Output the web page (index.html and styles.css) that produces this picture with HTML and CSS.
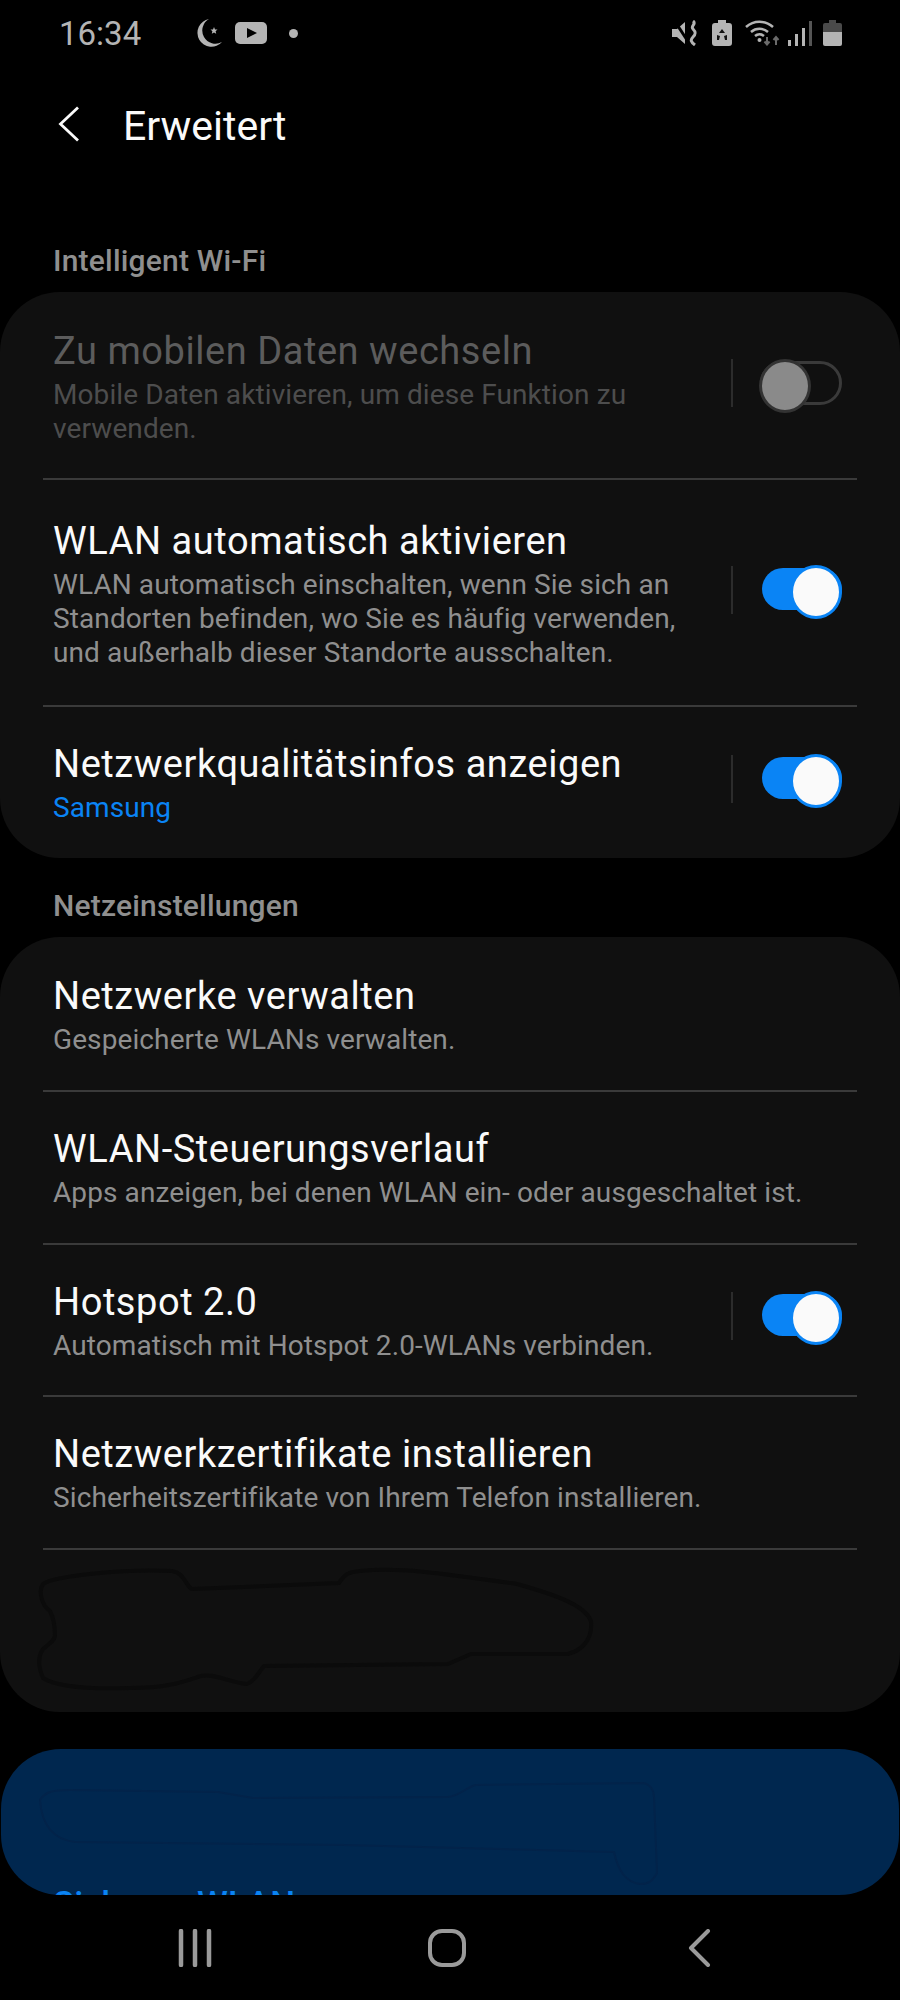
FILE: index.html
```html
<!DOCTYPE html>
<html lang="de">
<head>
  <meta charset="UTF-8">
  <meta name="viewport" content="width=device-width, initial-scale=1.0">
  <title>Erweitert</title>
  <link rel="stylesheet" href="styles.css">
</head>
<body>
  <div class="phone">
    <div class="status-bar">
      <div class="status-left">
        <span class="time">16:34</span>
        <svg class="icon-moon" width="26" height="30" viewBox="0 0 26 30">
          <path d="M12 1 A14 14 0 1 0 25 24 A13 13 0 0 1 12 1Z" fill="#b4b4b4"/>
          <path d="M17 9l1 2.4 2.5.2-1.9 1.6.6 2.5-2.2-1.3-2.2 1.3.6-2.5-1.9-1.6 2.5-.2z" fill="#b4b4b4"/>
        </svg>
        <svg class="icon-yt" width="32" height="22" viewBox="0 0 32 22">
          <rect width="32" height="22" rx="5" fill="#b4b4b4"/>
          <path d="M12 6l10 5-10 5z" fill="#000"/>
        </svg>
        <span class="status-dot"></span>
      </div>
      <div class="status-right">
        <svg width="26" height="26" viewBox="0 0 26 26">
          <path d="M0 9h5l8-7v22l-8-7H0z" fill="#b4b4b4"/>
          <path d="M2 0l15 23" stroke="#000" stroke-width="3"/>
          <path d="M21 1c4 3-3 5 0 8s3 5 0 8-2 5 2 8" fill="none" stroke="#b4b4b4" stroke-width="3"/>
        </svg>
        <svg class="icon-recycle" width="20" height="26" viewBox="0 0 20 26">
          <path d="M6 0h8v3h3a3 3 0 0 1 3 3v17a3 3 0 0 1-3 3H3a3 3 0 0 1-3-3V6a3 3 0 0 1 3-3h3z" fill="#b4b4b4"/>
          <path d="M10 9l3 4h-6zM5 15l3 1-1 4h-2zM15 15l-3 1 1 4h2z" fill="#111"/>
        </svg>
        <svg class="icon-wifi" width="36" height="26" viewBox="0 0 36 26">
          <path d="M1 7a20 20 0 0 1 27 0" fill="none" stroke="#b4b4b4" stroke-width="2.5"/>
          <path d="M6 12a13 13 0 0 1 17 0" fill="none" stroke="#b4b4b4" stroke-width="2.5"/>
          <path d="M10 16a7 7 0 0 1 9 0" fill="none" stroke="#b4b4b4" stroke-width="2.5"/>
          <circle cx="14.5" cy="20" r="2" fill="#b4b4b4"/>
          <path d="M22 17v7M19.5 21.500l2.500 3 2.500-3M31 25v-8M28.500 20l2.500-3 2.500 3" fill="none" stroke="#6a6a6a" stroke-width="2"/>
        </svg>
        <svg class="icon-signal" width="24" height="26" viewBox="0 0 24 26">
          <rect x="0" y="20" width="3" height="6" fill="#b4b4b4"/>
          <rect x="7" y="14" width="3" height="12" fill="#b4b4b4"/>
          <rect x="14" y="8" width="3" height="18" fill="#b4b4b4"/>
          <rect x="21" y="1" width="3" height="25" fill="#555"/>
        </svg>
        <svg class="icon-battery" width="19" height="26" viewBox="0 0 19 26">
          <path d="M6 0h7v3h4a2 2 0 0 1 2 2v7H0V5a2 2 0 0 1 2-2h4z" fill="#4a4a4a"/>
          <path d="M0 12h19v12a2 2 0 0 1-2 2H2a2 2 0 0 1-2-2z" fill="#b4b4b4"/>
        </svg>
      </div>
    </div>

    <div class="header">
      <svg class="back-icon" width="22" height="36" viewBox="0 0 22 36">
        <path d="M20 1.500L2.500 18 20 34.500" fill="none" stroke="#fafafa" stroke-width="2.800"/>
      </svg>
      <h1 class="page-title">Erweitert</h1>
    </div>

    <div class="content">
      <div class="section-label">Intelligent Wi-Fi</div>
      <div class="card">
        <div class="row disabled">
          <div class="row-text">
            <div class="row-title">Zu mobilen Daten wechseln</div>
            <div class="row-sub">Mobile Daten aktivieren, um diese Funktion zu verwenden.</div>
          </div>
          <div class="row-action">
            <span class="switch off"></span>
          </div>
        </div>
        <div class="row tall">
          <div class="row-text">
            <div class="row-title">WLAN automatisch aktivieren</div>
            <div class="row-sub">WLAN automatisch einschalten, wenn Sie sich an Standorten befinden, wo Sie es häufig verwenden, und außerhalb dieser Standorte ausschalten.</div>
          </div>
          <div class="row-action">
            <span class="switch on"></span>
          </div>
        </div>
        <div class="row last">
          <div class="row-text">
            <div class="row-title">Netzwerkqualitätsinfos anzeigen</div>
            <div class="row-sub accent">Samsung</div>
          </div>
          <div class="row-action">
            <span class="switch on"></span>
          </div>
        </div>
      </div>

      <div class="section-label next">Netzeinstellungen</div>
      <div class="card">
        <div class="row first">
          <div class="row-text">
            <div class="row-title">Netzwerke verwalten</div>
            <div class="row-sub">Gespeicherte WLANs verwalten.</div>
          </div>
        </div>
        <div class="row">
          <div class="row-text">
            <div class="row-title">WLAN-Steuerungsverlauf</div>
            <div class="row-sub">Apps anzeigen, bei denen WLAN ein- oder ausgeschaltet ist.</div>
          </div>
        </div>
        <div class="row">
          <div class="row-text">
            <div class="row-title">Hotspot 2.0</div>
            <div class="row-sub">Automatisch mit Hotspot 2.0-WLANs verbinden.</div>
          </div>
          <div class="row-action">
            <span class="switch on"></span>
          </div>
        </div>
        <div class="row">
          <div class="row-text">
            <div class="row-title">Netzwerkzertifikate installieren</div>
            <div class="row-sub">Sicherheitszertifikate von Ihrem Telefon installieren.</div>
          </div>
        </div>
        <!-- ausgemalte Stelle im Screenshot -->
        <div class="smudge-area">
          <svg class="smudge" width="600" height="130" viewBox="36 1565 600 130">
            <path d="M43 1583C55 1575 120 1568 172 1570C185 1572 186 1586 192 1588L339 1582C344 1574 348 1571 360 1570C400 1566 440 1572 517 1583C560 1595 585 1605 591 1620C593 1640 580 1650 568 1653L471 1653L448 1663L264 1665C258 1672 255 1680 247 1683C230 1682 215 1672 201 1675C185 1680 170 1687 130 1687C100 1688 60 1688 43 1677C38 1665 38 1655 43 1648C50 1642 54 1640 55 1635C55 1625 54 1618 50 1610C42 1605 38 1590 43 1583Z" fill="none" stroke="#0b0b0b" stroke-width="4" stroke-linejoin="round"/>
          </svg>
        </div>
      </div>

      <div class="card blue">
        <svg class="smudge" width="640" height="110" viewBox="36 1780 640 110">
          <path d="M40 1800C45 1792 52 1790 70 1790L218 1792 253 1798 448 1797C460 1796 468 1786 476 1785L643 1783C650 1784 654 1790 654 1797L657 1873C652 1882 648 1884 640 1884C625 1882 618 1870 614 1852L344 1845 75 1842C58 1840 42 1830 40 1800Z" fill="none" stroke="#02234a" stroke-width="2" stroke-linejoin="round"/>
        </svg>
        <div class="blue-link">Sicheres WLAN</div>
      </div>
    </div>

    <div class="nav-bar">
      <svg width="36" height="38" viewBox="0 0 36 38">
        <path d="M4 2v34M18 2v34M32 2v34" stroke="#9a9a9a" stroke-width="4.500" stroke-linecap="round"/>
      </svg>
      <svg width="40" height="38" viewBox="0 0 40 38">
        <rect x="3" y="2" width="34" height="34" rx="12" fill="none" stroke="#9a9a9a" stroke-width="4"/>
      </svg>
      <svg width="36" height="38" viewBox="0 0 36 38">
        <path d="M27 2L10 19 27 36" fill="none" stroke="#9a9a9a" stroke-width="4" stroke-linecap="round" stroke-linejoin="round"/>
      </svg>
    </div>
  </div>
</body>
</html>
```

FILE: styles.css
```css
/* GENERAL */
* {
  box-sizing: border-box;
}

body {
  margin: 0;
  background-color: #000;
  font-family: 'Roboto', 'Liberation Sans', sans-serif;
  color: #fafafa;
}

.phone {
  width: 900px;
  height: 2000px;
  display: flex;
  flex-direction: column;
  overflow: hidden;
}

/* STATUS BAR */
.status-bar {
  height: 64px;
  padding: 2px 58px 0 59px;
  display: flex;
  justify-content: space-between;
  align-items: center;
}

.status-left {
  display: flex;
  align-items: center;
}

.time {
  font-size: 33px;
  color: #b4b4b4;
  width: 138px;
}

.icon-yt {
  margin-left: 12px;
}

.status-dot {
  width: 9px;
  height: 9px;
  margin-left: 22px;
  border-radius: 50%;
  background-color: #b4b4b4;
}

.status-right {
  display: flex;
  align-items: center;
}

.icon-recycle {
  margin-left: 14px;
}

.icon-wifi {
  margin-left: 13px;
}

.icon-signal {
  margin-left: 7px;
}

.icon-battery {
  margin-left: 11px;
}

/* HEADER */
.header {
  height: 120px;
  padding: 0 0 0 58px;
  display: flex;
  align-items: center;
}

.page-title {
  margin: 4px 0 0 43px;
  font-size: 41px;
  font-weight: 400;
}

/* SECTIONS */
.content {
  flex: 1;
  min-height: 0;
  overflow: hidden;
}

.section-label {
  margin: 57px 0 11px 53px;
  height: 40px;
  line-height: 40px;
  font-size: 30px;
  font-weight: 500;
  letter-spacing: 0.2px;
  color: #8f8f8f;
}

.section-label.next {
  margin-top: 28px;
}

.card {
  background-color: #101010;
  border-radius: 60px;
}

.row {
  margin: 0 43px;
  padding: 33px 15px 32.6px 10px;
  display: flex;
  align-items: center;
  border-bottom: 2px solid #3a3a3a;
}

.row.first {
  padding: 35px 15px 33px 10px;
}

.row.disabled {
  padding: 35px 15px 32px 10px;
}

.row.tall {
  padding: 37px 15px 35px 10px;
}

.row.last {
  padding: 33px 15px 33px 10px;
  border-bottom: none;
}

.row-text {
  flex: 1;
  min-width: 0;
  padding-right: 30px;
}

.row-title {
  font-size: 38px;
  line-height: 48px;
  letter-spacing: 0.55px;
  margin-bottom: 3px;
  white-space: nowrap;
}

.row-sub {
  font-size: 28px;
  line-height: 34px;
  letter-spacing: 0.1px;
  color: #8f8f8f;
}

.row-sub.accent {
  color: #0a84f5;
}

.row.disabled .row-title {
  color: #5c5c5c;
}

.row.disabled .row-sub {
  color: #4d4d4d;
}

.row-action {
  width: 111px;
  height: 48px;
  margin-bottom: 8px;
  flex-shrink: 0;
  border-left: 2px solid #2c2c2c;
  display: flex;
  align-items: center;
  justify-content: flex-end;
}

/* SWITCHES */
.switch {
  position: relative;
  width: 80px;
  height: 42px;
  margin-bottom: 2px;
  border-radius: 21px;
}

.switch::after {
  content: '';
  position: absolute;
  top: -3px;
  width: 46px;
  height: 48px;
  border-radius: 50%;
}

.switch.on {
  background-color: #0a84f5;
}

.switch.on::after {
  right: 0;
  background-color: #fafafa;
  border: 3px solid #0a84f5;
}

.switch.off {
  width: 82px;
  height: 44px;
  margin-bottom: 0;
  border: 3px solid #3a3a3a;
  border-radius: 22px;
}

.switch.off::after {
  top: -5px;
  left: -4px;
  background-color: #8a8a8a;
  border: 3px solid #333;
}

/* SMUDGES OVER THE CARDS */
.smudge-area {
  height: 162px;
  position: relative;
}

.smudge {
  position: absolute;
  left: 36px;
  top: 16px;
}

.card.blue {
  position: relative;
  height: 146px;
  margin: 37px 1px 0;
  overflow: hidden;
  background-color: #00274f;
}

.card.blue .smudge {
  left: 35px;
  top: 31px;
}

.blue-link {
  position: absolute;
  left: 52px;
  top: 135px;
  font-size: 35px;
  font-weight: 500;
  white-space: nowrap;
  color: #0a84f5;
}

/* NAV */
.nav-bar {
  height: 105px;
  padding: 0 6px 0 0;
  display: flex;
  justify-content: center;
  align-items: center;
  gap: 214px;
  background-color: #000;
}
```
